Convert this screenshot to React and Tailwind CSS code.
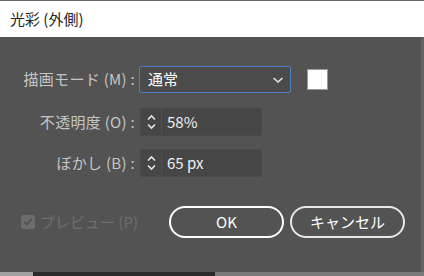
import React from "react";

const font = "font-['Noto_Sans_CJK_JP','Noto_Sans',sans-serif]";

function Spinner({ value }) {
  return (
    <div className="ml-[4px] flex h-[28px] w-[122px] items-stretch rounded-[2px] border border-[#4a4a4a] bg-[#464646]">
      <div className="flex w-[21px] flex-col items-center justify-center border-r border-[#515151]">
        <svg width="11" height="20" viewBox="0 0 11 20" fill="none" stroke="#e6e6e6" strokeWidth="1.6">
          <path d="M2 7.5 L5.5 4 L9 7.5" />
          <path d="M2 12.5 L5.5 16 L9 12.5" />
        </svg>
      </div>
      <div className="flex items-center pl-[5px] text-[15px] text-[#f0f0f0]">{value}</div>
    </div>
  );
}

function Row({ label, children, className }) {
  return (
    <div className={"flex items-center " + (className || "")}>
      <div className="w-[136px] whitespace-nowrap pr-[1px] text-right text-[15px] tracking-[0.3px] text-[#c6c6c6]">
        {label}
      </div>
      {children}
    </div>
  );
}

export default function App() {
  return (
    <div className={`relative flex h-[276px] w-[424px] flex-col overflow-hidden bg-[#535353] ${font}`}>
      <div className="flex h-[37px] items-center border-t border-[#6a6a6a] bg-white pl-[10px] text-[15px] text-[#222]">
        光彩 (外側)
      </div>

      <div className="flex flex-1 flex-col border-r-[3px] border-[#626262] pt-[29px]">
        <Row label="描画モード (M) :">
          <div className="ml-[3px] flex h-[27px] w-[152px] items-center justify-between rounded-[2px] border border-[#4d80bf] bg-[#4b4b4b] pl-[8px] pr-[6px] text-[15px] text-white">
            <span>通常</span>
            <svg width="12" height="8" viewBox="0 0 12 8" fill="none" stroke="#e6e6e6" strokeWidth="1.6">
              <path d="M1.5 2 L6 6 L10.5 2" />
            </svg>
          </div>
          <div className="ml-[16px] h-[21px] w-[21px] border border-[#9a9a9a] bg-white" />
        </Row>

        <Row label="不透明度 (O) :" className="mt-[15px]">
          <Spinner value="58%" />
        </Row>

        <Row label="ぼかし (B) :" className="mt-[13px]">
          <Spinner value="65 px" />
        </Row>

        <div className="mt-[29px] flex items-center">
          <div className="flex w-[164px] items-center whitespace-nowrap pl-[21px] text-[15px] text-[#6e6e6e]">
            <div className="flex h-[14px] w-[14px] shrink-0 items-center justify-center rounded-[2px] bg-[#6c6c6c]">
              <svg width="10" height="10" viewBox="0 0 10 10" fill="none" stroke="#505050" strokeWidth="1.8">
                <path d="M1.5 5 L4 7.5 L8.5 2" />
              </svg>
            </div>
            <span className="ml-[5px]">プレビュー (P)</span>
          </div>
          <button className="ml-[5px] h-[32px] w-[115px] rounded-full border-2 border-white text-[15px] text-white">
            OK
          </button>
          <button className="ml-[6px] h-[32px] w-[115px] rounded-full border-2 border-[#e8e8e8] text-[15px] text-white">
            キャンセル
          </button>
        </div>
      </div>

      <div className="flex h-[4px]">
        <div className="w-[33px] bg-[#a0a0a0]" />
        <div className="w-[182px] bg-[#2a2a2a]" />
        <div className="flex-1 bg-[#7a7a7a]" />
      </div>
    </div>
  );
}
